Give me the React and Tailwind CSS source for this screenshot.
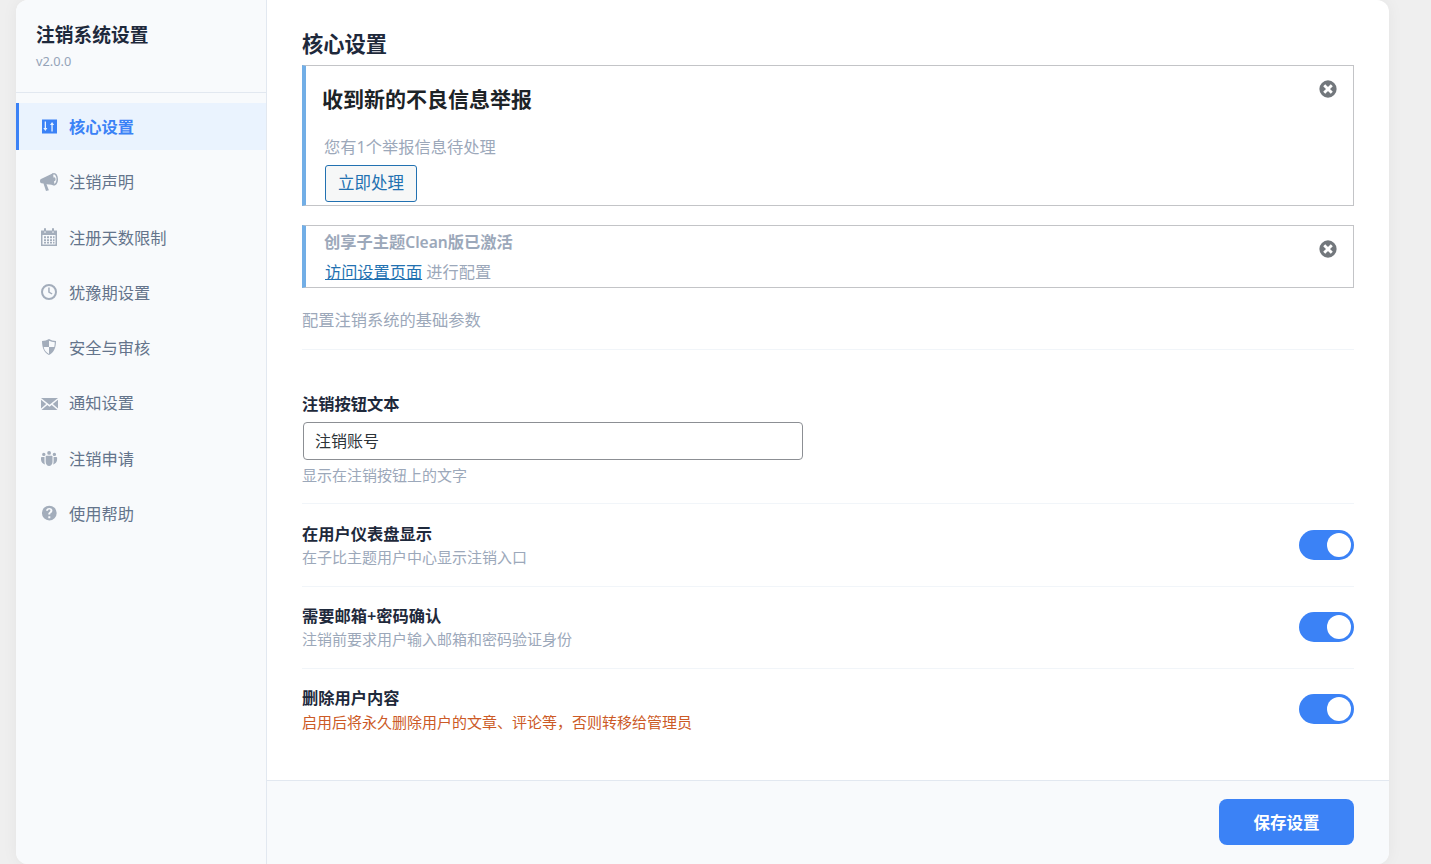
import React from 'react';

const iconPaths = {
  settings: (
    <path fillRule="evenodd" d="M3 2.500h15v14H3v-14zM5.700 4.500v6.500H4.300l2.050 3 2.050-3H7V4.500H5.700zm8 10V8h1.400l-2.050-3L11 8h1.400v6.500h1.300z" />
  ),
  megaphone: (
    <>
      <path d="M14 1.200 15.500 13 7.500 12.200 9.900 18.200 7 19 4.500 11.600 2.600 11.200C1.400 10.900 1 10 1 8.900c0-1 .500-1.800 1.500-2.200L14 1.200z" />
      <path fillRule="evenodd" d="M15 1c2.300 0 4 2.800 4 6.300s-1.700 6.300-4 6.300-4-2.800-4-6.300S12.700 1 15 1zm0 1.600c-1.300 0-2.500 2.100-2.500 4.700s1.200 4.700 2.500 4.700 2.500-2.100 2.500-4.700-1.200-4.700-2.500-4.700zm.200 2.700c.800 0 1.400.900 1.400 2s-.600 2-1.400 2-1.400-.900-1.400-2 .600-2 1.400-2z" />
    </>
  ),
  calendar: (
    <path fillRule="evenodd" d="M2 2.500h3V1a1 1 0 0 1 2 0v1.500h6V1a1 1 0 0 1 2 0v1.500h3V18H2V2.500zM5.500 3.200V5h1V3.200h-1zm8 0V5h1V3.200h-1zM3.500 7v9.500h13V7h-13zM5 8.300h2v2H5v-2zm3 0h2v2H8v-2zm3 0h2v2h-2v-2zm3 0h1.500v2H14v-2zM5 11.200h2v2H5v-2zm3 0h2v2H8v-2zm3 0h2v2h-2v-2zm3 0h1.500v2H14v-2zM5 14h2v1.500H5V14zm3 0h2v1.500H8V14zm3 0h2v1.500h-2V14zm3 0h1.500v1.500H14V14z" />
  ),
  clock: (
    <path fillRule="evenodd" d="M10 1a8 8 0 1 1 0 16 8 8 0 0 1 0-16zm0 2a6 6 0 1 0 0 12 6 6 0 0 0 0-12zM9.200 4.500h1.500v4.200l2.800 1.700-.700 1.200-3.600-2.200V4.500z" />
  ),
  shield: (
    <path fillRule="evenodd" d="M10 1c2 1.300 4.300 2 7 2 0 6.500-2 11.500-7 14C5 14.500 3 9.500 3 3c2.700 0 5-.700 7-2zm0 1.700v6.300H4.700c.600 3.100 2.200 5.400 5.300 6.900V9h5.300c.300-1.500.400-3 .500-4.700-2-.200-4.100-.800-5.800-1.600z" />
  ),
  email: (
    <path d="M2 4h17L10.500 10.800 2 4zm0 1.800 5.200 4.200L2 14.600V5.800zm17 0v8.800L13.800 10 19 5.800zM8.300 10.900l2.200 1.800 2.200-1.800 5.800 5.100H2.500l5.800-5.100z" />
  ),
  groups: (
    <path d="M10.100 2a1.900 1.900 0 1 1 0 3.800 1.900 1.900 0 0 1 0-3.800zM4.800 3.700a1.700 1.700 0 1 1 0 3.400 1.700 1.700 0 0 1 0-3.400zm10.600 0a1.700 1.700 0 1 1 0 3.400 1.700 1.700 0 0 1 0-3.400zM7.500 6.700h5.200c.500 0 .800.300.800.800v5.500c0 2.300-1.500 4-3.400 4s-3.400-1.700-3.400-4V7.500c0-.500.300-.800.800-.800zM2.800 8h2.700v5c0 .900.200 1.700.500 2.400C3.800 15 2 13.200 2 10.500V8.800c0-.500.300-.800.800-.800zm12 0h2.500c.500 0 .800.300.800.800v1.700c0 2.700-1.800 4.500-4 4.900.300-.700.500-1.500.500-2.400V8h.200z" />
  ),
  help: (
    <path fillRule="evenodd" d="M10.300 1.700a7.400 7.400 0 1 1 0 14.800 7.400 7.400 0 0 1 0-14.800zm1 10.500H9.300v2h2v-2zM10.300 4c-1.900 0-3.100 1-3.200 2.800h1.900c.100-.700.500-1.200 1.300-1.200.700 0 1.100.400 1.100 1 0 .600-.300.900-.900 1.300-.900.600-1.200 1.200-1.200 2.200v.500h1.900v-.300c0-.600.200-.900.900-1.300.900-.700 1.300-1.300 1.300-2.400C13.400 5 12.200 4 10.300 4z" />
  ),
};

const menu = [
  { key: 'settings', label: '核心设置', active: true },
  { key: 'megaphone', label: '注销声明' },
  { key: 'calendar', label: '注册天数限制' },
  { key: 'clock', label: '犹豫期设置' },
  { key: 'shield', label: '安全与审核' },
  { key: 'email', label: '通知设置' },
  { key: 'groups', label: '注销申请' },
  { key: 'help', label: '使用帮助' },
];

const toggles = [
  { title: '在用户仪表盘显示', desc: '在子比主题用户中心显示注销入口', row: 'flex h-[83px] items-center justify-between border-b border-[#f1f5f9] pb-[1px]' },
  { title: '需要邮箱+密码确认', desc: '注销前要求用户输入邮箱和密码验证身份', row: 'flex h-[82px] items-center justify-between border-b border-[#f1f5f9] pb-[2px]' },
  { title: '删除用户内容', desc: '启用后将永久删除用户的文章、评论等，否则转移给管理员', warn: true, row: 'flex h-[82px] items-center justify-between pb-[2px]' },
];

function Icon({ name, className }) {
  return (
    <svg viewBox="0 0 20 20" fill="currentColor" className={className}>
      {iconPaths[name]}
    </svg>
  );
}

function Dismiss() {
  return (
    <svg viewBox="0 0 20 20" className="absolute right-[16px] top-[14px] h-[18px] w-[18px]">
      <circle cx="10" cy="10" r="9.600" fill="#72777c" />
      <path d="M5.800 5.800l8.400 8.400M14.200 5.800l-8.400 8.400" stroke="#fff" strokeWidth="3.200" />
    </svg>
  );
}

function Toggle() {
  return (
    <div className="flex h-[30px] w-[55px] items-center justify-end rounded-full bg-[#3b82f6] pr-[3px]">
      <div className="h-[24px] w-[24px] rounded-full bg-white" />
    </div>
  );
}

export default function App() {
  return (
    <div className="h-[864px] overflow-hidden bg-[#efefef] pl-[16px] pr-[42px] font-['Noto_Sans','Noto_Sans_CJK_SC',sans-serif]">
      <div className="flex h-[864px] overflow-hidden rounded-xl bg-white shadow-[0_0_16px_rgba(0,0,0,0.05)]">
        {/* Sidebar */}
        <div className="w-[251px] shrink-0 border-r border-[#e2e8f0] bg-[#f8fafc]">
          <div className="h-[93px] border-b border-[#e2e8f0] pl-[20px] pt-[21px]">
            <h1 className="text-[18.750px] leading-[28px] font-bold text-[#1e293b]">注销系统设置</h1>
            <div className="mt-[3px] text-[12.750px] leading-[18px] text-[#94a3b8]">v2.0.0</div>
          </div>
          <ul className="pt-[10px]">
            {menu.map((item) => (
              <li
                key={item.key}
                className={
                  item.active
                    ? 'mb-[8px] flex h-[47.300px] items-center border-l-[3px] border-[#3b82f6] bg-[#eaf3fe] pt-[1px] pl-[20px] text-[16.250px] font-semibold text-[#3b82f6]'
                    : 'mb-[8px] flex h-[47.300px] items-center border-l-[3px] border-transparent pt-[1px] pl-[20px] text-[16.250px] text-[#64748b]'
                }
              >
                <Icon
                  name={item.key}
                  className={item.active ? 'mr-[10px] h-[20px] w-[20px] text-[#3b82f6]' : 'mr-[10px] h-[20px] w-[20px] text-[#a3adbb]'}
                />
                {item.label}
              </li>
            ))}
          </ul>
        </div>

        {/* Main Content */}
        <div className="flex min-w-0 flex-1 flex-col">
          <div className="flex-1 px-[35px] pt-[29px]">
            <h2 className="text-[21.250px] leading-[30px] font-semibold text-[#1e293b]">核心设置</h2>
            <div className="relative mt-[6px] h-[141px] border border-l-4 border-[#c3c4c7] border-l-[#72aee6] pl-[16px]">
              <Dismiss />
              <div className="pt-[18px] text-[21px] leading-[30px] font-semibold text-[#1d2327]">收到新的不良信息举报</div>
              <div className="mt-[22px] pl-[2px] text-[16.250px] leading-[22px] text-[#9ca8ba]">您有1个举报信息待处理</div>
              <button className="mt-[7px] ml-[3px] h-[37px] w-[92px] rounded-[3px] border border-[#2271b1] bg-[#f6f7f7] text-[16.500px] text-[#2271b1]">立即处理</button>
            </div>
            <div className="relative mt-[19px] h-[63px] border border-l-4 border-[#c3c4c7] border-l-[#72aee6] pl-[18px]">
              <Dismiss />
              <div className="pt-[4px] text-[16.250px] leading-[24px] font-semibold text-[#9ca8ba]">
                创享子主题<span className="text-[15.600px]">Clean</span>版已激活
              </div>
              <div className="mt-[6px] pl-[1px] text-[16.200px] leading-[24px] text-[#9ca8ba]">
                <a className="text-[#2271b1] underline">访问设置页面</a> 进行配置
              </div>
            </div>
            <p className="mt-[20px] border-b border-[#f1f5f9] pb-[17px] text-[16.250px] leading-[24px] text-[#9ca8ba]">配置注销系统的基础参数</p>

            <div className="border-b border-[#f1f5f9] pt-[42px] pb-[16px]">
              <label className="block text-[16.250px] leading-[24px] font-semibold text-[#1e293b]">注销按钮文本</label>
              <input
                readOnly
                value="注销账号"
                className="mt-[6px] ml-[1px] block h-[38px] w-[500px] rounded-[4px] border border-[#8c8f94] px-[11px] pb-[2px] text-[16px] text-[#2c3338]"
              />
              <p className="mt-[3px] text-[15px] leading-[24px] text-[#9ca8ba]">显示在注销按钮上的文字</p>
            </div>

            {toggles.map((t) => (
              <div key={t.title} className={t.row}>
                <div>
                  <div className="mt-[1px] text-[16.250px] leading-[24px] font-semibold text-[#1e293b]">{t.title}</div>
                  <div className={t.warn ? '-mt-[1px] translate-y-px text-[15px] leading-[24px] text-[#cc5a26]' : '-mt-[1px] text-[15px] leading-[24px] text-[#9ca8ba]'}>{t.desc}</div>
                </div>
                <Toggle />
              </div>
            ))}
          </div>

          {/* Footer */}
          <div className="flex h-[84px] items-start justify-end border-t border-[#e2e8f0] bg-[#f8fafc] px-[35px] pt-[18px]">
            <button className="h-[46px] w-[135px] rounded-lg bg-[#3b82f6] pt-[2px] text-[16.500px] font-semibold text-white">保存设置</button>
          </div>
        </div>
      </div>
    </div>
  );
}
